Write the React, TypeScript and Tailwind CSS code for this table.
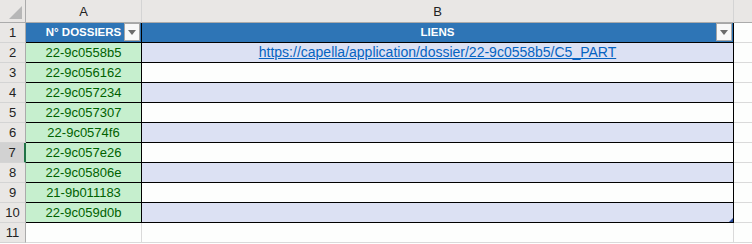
import React from "react";

const ids = [
  "22-9c0558b5",
  "22-9c056162",
  "22-9c057234",
  "22-9c057307",
  "22-9c0574f6",
  "22-9c057e26",
  "22-9c05806e",
  "21-9b011183",
  "22-9c059d0b",
];

function Dropdown() {
  return (
    <div className="absolute right-[1px] top-[0px] flex h-[18px] w-[16px] items-center justify-center border border-[#a6a6a6] bg-[#f8f8f8]">
      <svg width="8" height="5" viewBox="0 0 8 5">
        <path d="M0 0 L8 0 L4 5 Z" fill="#6b6b6b" />
      </svg>
    </div>
  );
}

export default function App() {
  const font = { fontFamily: '"Liberation Sans", Arial, sans-serif' };
  return (
    <div className="h-[244px] w-[752px] overflow-hidden bg-[#ffffff] text-[13px]" style={font}>
      <div className="grid grid-cols-[26px_116px_592px_19px] grid-rows-[23px_repeat(11,20px)]">
        {/* column headers */}
        <div className="relative border-b border-r border-b-[#ababab] border-r-[#ababab] bg-[#e9e7e5]">
          <svg className="absolute bottom-[3px] right-[3px]" width="13" height="13" viewBox="0 0 13 13">
            <path d="M13 0 L13 13 L0 13 Z" fill="#b7b7b7" />
          </svg>
        </div>
        <div className="flex items-end justify-center border-b border-r border-b-[#ababab] border-r-[#d4d4d4] bg-[#e9e7e5] pb-[1px] text-[#222]">A</div>
        <div className="flex items-end justify-center border-b border-r border-b-[#ababab] border-r-[#d4d4d4] bg-[#e9e7e5] pb-[1px] text-[#222]">B</div>
        <div className="border-b border-b-[#ababab] bg-[#e9e7e5]"></div>

        {/* row 1 */}
        <div className="flex items-center justify-center border-b border-r border-b-[#d4d4d4] border-r-[#ababab] bg-[#e9e7e5] text-[#222]">1</div>
        <div className="relative flex items-center justify-center border-b border-r border-b-black border-r-black bg-[#2e75b6] text-[11.5px] font-bold text-white">
          N° DOSSIERS
          <Dropdown />
        </div>
        <div className="relative flex items-center justify-center border-b border-r border-b-black border-r-black bg-[#2e75b6] text-[11.5px] font-bold text-white">
          LIENS
          <Dropdown />
        </div>
        <div className="border-b border-b-[#dadada] bg-[#fdfefd]"></div>

        {ids.map((id, i) => {
          const row = i + 2;
          const banded = row % 2 === 0;
          const active = row === 7;
          return (
            <React.Fragment key={id}>
              <div
                className={
                  active
                    ? "flex items-center justify-center border-b border-r-2 border-b-[#d4d4d4] border-r-[#217346] bg-[#d2d2d2] text-[#222]"
                    : "flex items-center justify-center border-b border-r border-b-[#d4d4d4] border-r-[#ababab] bg-[#e9e7e5] text-[#222]"
                }
              >
                {row}
              </div>
              <div className="flex items-center justify-center border-b border-r border-b-black border-r-black bg-[#c6efce] text-[#006100]">
                {id}
              </div>
              <div
                className={
                  banded
                    ? "relative flex items-center justify-center border-b border-r border-b-black border-r-black bg-[#dce1f3]"
                    : "relative flex items-center justify-center border-b border-r border-b-black border-r-black bg-[#fdfefd]"
                }
              >
                {row === 2 ? (
                  <span className="text-[14px] text-[#0563c1] underline">
                    https://capella/application/dossier/22-9c0558b5/C5_PART
                  </span>
                ) : null}
                {row === 10 ? (
                  <svg className="absolute bottom-[0px] right-[0px]" width="4" height="4" viewBox="0 0 4 4">
                    <path d="M4 0 L4 4 L0 4 Z" fill="#2a4fa0" />
                  </svg>
                ) : null}
              </div>
              <div className="border-b border-b-[#dadada] bg-[#fdfefd]"></div>
            </React.Fragment>
          );
        })}

        {/* row 11 */}
        <div className="flex items-center justify-center border-b border-r border-b-[#d4d4d4] border-r-[#ababab] bg-[#e9e7e5] text-[#222]">11</div>
        <div className="border-b border-r border-b-[#dadada] border-r-[#dadada] bg-[#fdfefd]"></div>
        <div className="border-b border-r border-b-[#dadada] border-r-[#dadada] bg-[#fdfefd]"></div>
        <div className="border-b border-b-[#dadada] bg-[#fdfefd]"></div>
      </div>
    </div>
  );
}
